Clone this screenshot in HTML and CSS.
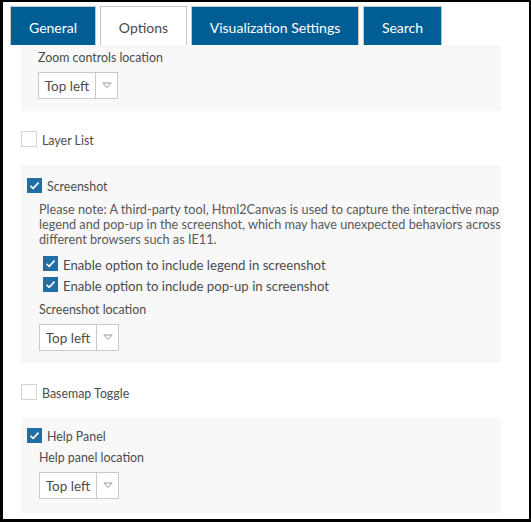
FILE: index.html
```html
<!DOCTYPE html>
<html>
<head>
<meta charset="utf-8">
<link rel="stylesheet" href="styles.css">
</head>
<body>
<div class="frame">
  <div class="tabs">
    <div class="tab tab-general">General</div>
    <div class="tab tab-active tab-options">Options</div>
    <div class="tab tab-vis">Visualization Settings</div>
    <div class="tab tab-search">Search</div>
  </div>
  <div class="content">
    <div class="panel panel-zoom">
      <div class="field-label">Zoom controls location</div>
      <div class="select"><span class="select-value">Top left</span><span class="select-arrow"><svg width="10" height="7" viewBox="0 0 10 7"><path d="M0.8 1 L5 5.6 L9.2 1 Z" fill="none" stroke="#9a9a9a" stroke-width="1"/></svg></span></div>
    </div>
    <div class="row row-layer">
      <span class="cb"></span><span class="row-label">Layer List</span>
    </div>
    <div class="panel panel-shot">
      <div class="row row-in">
        <span class="cb cb-on"><svg width="15" height="15" viewBox="0 0 15 15"><path d="M3.5 7.8 L6.2 10.3 L11.5 4.6" fill="none" stroke="#fff" stroke-width="1.6"/></svg></span><span class="row-label">Screenshot</span>
      </div>
      <p class="note">Please note: A third-party tool, Html2Canvas is used to capture the interactive map legend and pop-up in the screenshot, which may have unexpected behaviors across different browsers such as IE11.</p>
      <div class="sub-rows">
        <div class="row row-sub">
          <span class="cb cb-on"><svg width="15" height="15" viewBox="0 0 15 15"><path d="M3.5 7.8 L6.2 10.3 L11.5 4.6" fill="none" stroke="#fff" stroke-width="1.6"/></svg></span><span class="row-label">Enable option to include legend in screenshot</span>
        </div>
        <div class="row row-sub">
          <span class="cb cb-on"><svg width="15" height="15" viewBox="0 0 15 15"><path d="M3.5 7.8 L6.2 10.3 L11.5 4.6" fill="none" stroke="#fff" stroke-width="1.6"/></svg></span><span class="row-label">Enable option to include pop-up in screenshot</span>
        </div>
      </div>
      <div class="field-label field-shot">Screenshot location</div>
      <div class="select"><span class="select-value">Top left</span><span class="select-arrow"><svg width="10" height="7" viewBox="0 0 10 7"><path d="M0.8 1 L5 5.6 L9.2 1 Z" fill="none" stroke="#9a9a9a" stroke-width="1"/></svg></span></div>
    </div>
    <div class="row row-basemap">
      <span class="cb"></span><span class="row-label">Basemap Toggle</span>
    </div>
    <div class="panel panel-help">
      <div class="row row-in">
        <span class="cb cb-on"><svg width="15" height="15" viewBox="0 0 15 15"><path d="M3.5 7.8 L6.2 10.3 L11.5 4.6" fill="none" stroke="#fff" stroke-width="1.6"/></svg></span><span class="row-label">Help Panel</span>
      </div>
      <div class="field-label field-help">Help panel location</div>
      <div class="select"><span class="select-value">Top left</span><span class="select-arrow"><svg width="10" height="7" viewBox="0 0 10 7"><path d="M0.8 1 L5 5.6 L9.2 1 Z" fill="none" stroke="#9a9a9a" stroke-width="1"/></svg></span></div>
    </div>
  </div>
</div>
</body>
</html>
```

FILE: styles.css
```css
html, body {
  margin: 0;
  padding: 0;
  background: #000;
}
body {
  width: 531px;
  height: 522px;
  overflow: hidden;
}
.frame {
  margin: 2px 0 0 3px;
  width: 526px;
  height: 517px;
  background: #fff;
  overflow: hidden;
  font-family: Lato, "Liberation Sans", sans-serif;
  color: #4c4c4c;
}
.tabs {
  display: flex;
  padding: 4px 0 0 7px;
  gap: 4px;
  height: 39px;
}
.tab {
  box-sizing: border-box;
  height: 39px;
  border: 1px solid #c6c6c6;
  border-bottom: none;
  background: #005e95;
  color: #fff;
  font-size: 14px;
  display: flex;
  align-items: center;
  justify-content: center;
  padding-top: 3px;
}
.tab-general { width: 86px; }
.tab-options { width: 87px; }
.tab-vis { width: 168px; }
.tab-search { width: 79px; }
.tab-active {
  background: #fff;
  color: #4a4a4a;
}
.content {
  padding-left: 18px;
  font-size: 12.4px;
}
.panel {
  width: 480px;
  box-sizing: border-box;
  background: #f8f8f8;
}
.panel-zoom {
  height: 66px;
  padding: 5px 0 0 17px;
}
.panel-shot {
  margin-top: 18px;
  height: 198px;
  padding: 13px 0 0 6px;
}
.panel-help {
  margin-top: 18px;
  height: 95px;
  padding: 10px 0 0 6px;
}
.field-label {
  line-height: 16px;
  height: 16px;
}
.field-shot, .field-help {
  margin-left: 12px;
}
.select {
  display: flex;
  box-sizing: border-box;
  width: 80px;
  height: 27px;
  margin-top: 6px;
  border: 1px solid #c9c9c9;
  background: #fff;
  align-items: stretch;
}
.panel-shot .select, .panel-help .select {
  margin-left: 12px;
}
.select-value {
  width: 57px;
  display: flex;
  align-items: center;
  justify-content: center;
  border-right: 1px solid #c9c9c9;
  font-size: 13.5px;
  color: #4c4c4c;
  padding-top: 1px;
  box-sizing: border-box;
}
.select-arrow {
  flex: 1;
  display: flex;
  align-items: center;
  justify-content: center;
}
.row {
  display: flex;
  align-items: center;
  gap: 5px;
}
.row-layer {
  margin-top: 20px;
  height: 16px;
}
.row-basemap {
  margin-top: 21px;
  height: 16px;
}
.row-in {
  height: 15px;
}
.cb {
  box-sizing: border-box;
  width: 16px;
  height: 16px;
  border: 1px solid #d4d4d4;
  background: #fff;
  display: inline-block;
  flex: none;
}
.cb-on {
  width: 15px;
  height: 15px;
  border: none;
  background: #1f6ea6;
}
.cb-on svg { display: block; }
.row-label {
  line-height: 16px;
  padding-top: 3px;
}
.row-in .row-label, .row-sub .row-label {
  padding-top: 2px;
}
.note {
  margin: 9px 0 0 12px;
  line-height: 15px;
  color: #595959;
  width: 466px;
  font-size: 12.7px;
}
.sub-rows {
  margin: 9px 0 0 16px;
  display: flex;
  flex-direction: column;
  gap: 6px;
}
.row-sub {
  height: 15px;
}
.row-sub .row-label {
  font-size: 13.2px;
}
.field-shot {
  margin-top: 10px;
}
.field-help {
  margin-top: 7px;
}
```
